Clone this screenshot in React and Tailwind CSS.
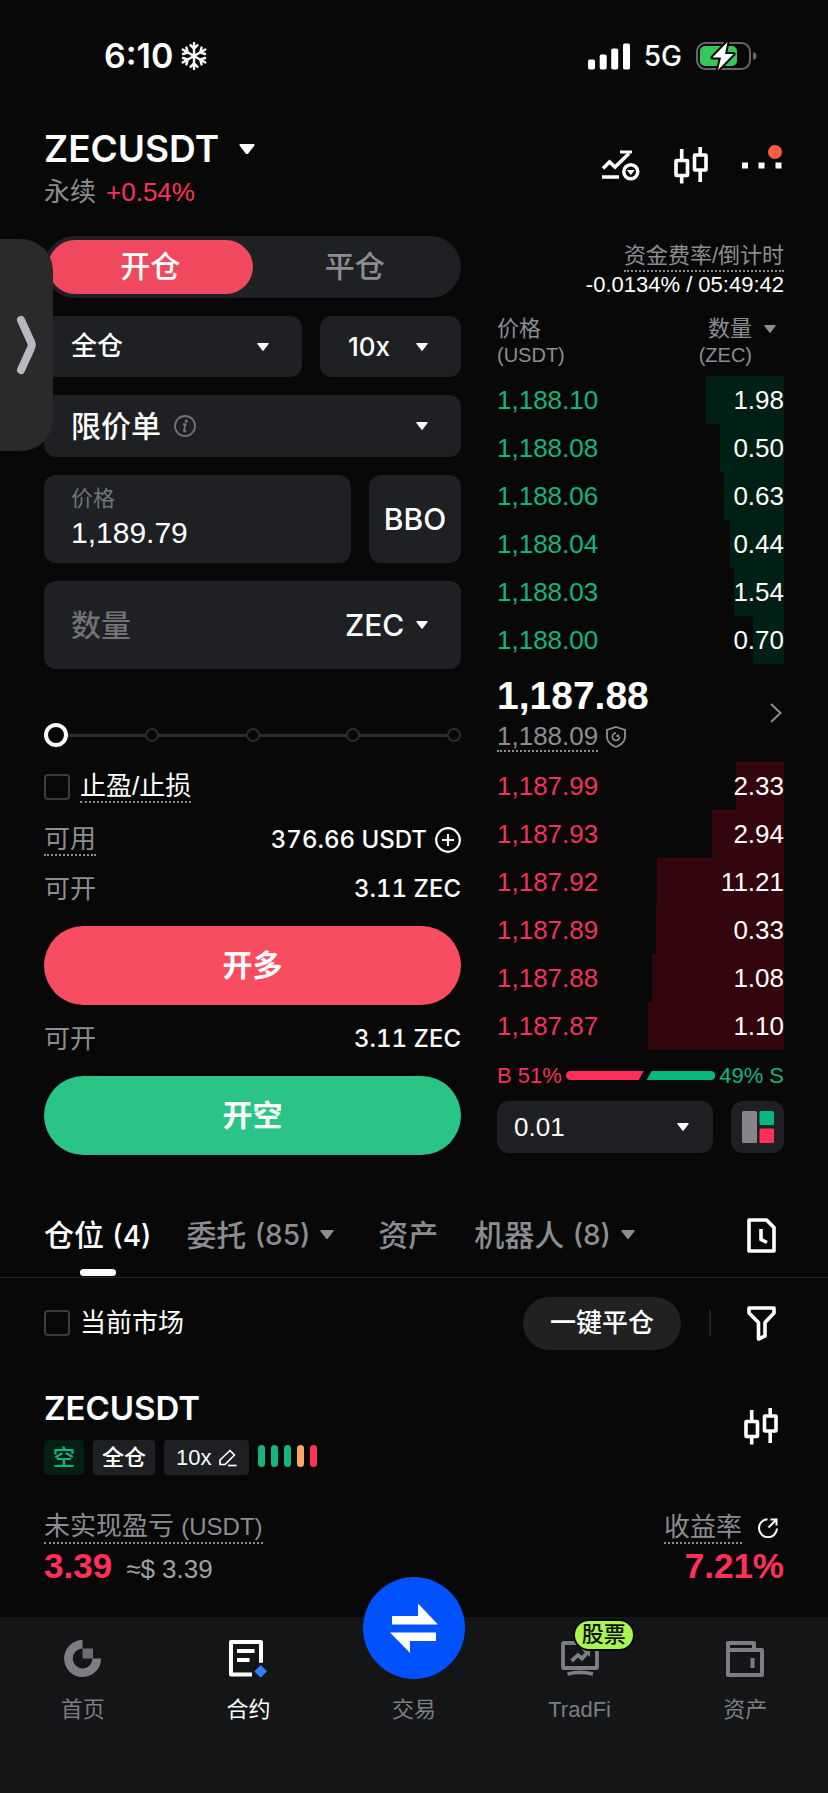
import { useState } from 'react';

const asks = [
  { price: '1,188.10', size: '1.98', depth: 78 },
  { price: '1,188.08', size: '0.50', depth: 64 },
  { price: '1,188.06', size: '0.63', depth: 60 },
  { price: '1,188.04', size: '0.44', depth: 54 },
  { price: '1,188.03', size: '1.54', depth: 50 },
  { price: '1,188.00', size: '0.70', depth: 31 },
];

const bids = [
  { price: '1,187.99', size: '2.33', depth: 48 },
  { price: '1,187.93', size: '2.94', depth: 72 },
  { price: '1,187.92', size: '11.21', depth: 127 },
  { price: '1,187.89', size: '0.33', depth: 128 },
  { price: '1,187.88', size: '1.08', depth: 132 },
  { price: '1,187.87', size: '1.10', depth: 136 },
];

const MAX_DEPTH = 287;

function Caret({ className = 'w-3' }) {
  return (
    <svg viewBox="0 0 12 8" fill="currentColor" className={className} aria-hidden="true">
      <path d="M1 0h10a.7.7 0 01.6 1.1L6.6 7.6a.8.8 0 01-1.2 0L.4 1.1A.7.7 0 011 0z" />
    </svg>
  );
}

function CandleIcon() {
  return (
    <svg viewBox="0 0 34 37" className="w-[34px] h-[37px]" fill="none" stroke="currentColor" strokeWidth="3.6" aria-hidden="true">
      <rect x="2" y="13.5" width="11.5" height="15" rx="0.5" />
      <path d="M7.7 2v11M7.7 29v7.5" />
      <rect x="20.5" y="8" width="11.5" height="15" rx="0.5" />
      <path d="M26.2 0v8M26.2 23v12" />
    </svg>
  );
}

/** Text with the dotted underline that marks an explainable term. */
function Term({ children, className = '' }) {
  return <span className={`inline-block border-b-2 border-dotted border-[#8b8d91] ${className}`}>{children}</span>;
}

/**
 * Drop-down in the dark field style, caret on the right.
 */
function Picker({ label, options, className = '', caret = 'right-[33px]' }) {
  return (
    <div className="relative h-full">
      <select
        aria-label={label}
        className={`w-full h-full appearance-none rounded-xl bg-[#1e2023] text-white outline-none ${className}`}
      >
        {options.map((o) => (
          <option key={o}>{o}</option>
        ))}
      </select>
      <span className={`absolute inset-y-0 flex items-center pointer-events-none ${caret}`}>
        <Caret />
      </span>
    </div>
  );
}

function CheckRow({ id, children }) {
  return (
    <div className="flex items-center gap-[10px]">
      <input
        id={id}
        type="checkbox"
        className="w-[26px] h-[26px] shrink-0 appearance-none rounded-sm border-2 border-[#3b3c40] checked:bg-[#f84c60]"
      />
      <label htmlFor={id} className="text-[26px] leading-[30px]">
        {children}
      </label>
    </div>
  );
}

function StatusBar() {
  return (
    <div className="h-28 flex items-center justify-between pl-[104px] pr-[71px] font-[family-name:Inter,sans-serif]">
      <div className="flex items-center gap-2">
        <span className="text-[34px] leading-10 font-semibold">6:10</span>
        <svg viewBox="0 0 26 28" className="w-[26px] h-7" fill="none" stroke="currentColor" strokeWidth="2.4" strokeLinecap="round">
          <path d="M13 1v26M1.7 7.5l22.6 13M1.7 20.5l22.6-13" />
          <path d="M9.5 3.2L13 6.5l3.5-3.3M9.5 24.8l3.5-3.3 3.5 3.3" />
          <path d="M2 12l4.8-1.5L5.4 5.6M24 12l-4.8-1.5 1.4-4.9M2 16l4.8 1.5-1.4 4.9M24 16l-4.8 1.5 1.4 4.9" />
        </svg>
      </div>
      <div className="flex items-center">
        <svg viewBox="0 0 42 27" className="w-[42px] h-[27px]" fill="currentColor">
          <rect x="0" y="16.5" width="7" height="10" rx="1.8" />
          <rect x="11.7" y="11.5" width="7" height="15" rx="1.8" />
          <rect x="23.2" y="5.5" width="7" height="21" rx="1.8" />
          <rect x="35" y="0.5" width="7" height="26" rx="1.8" />
        </svg>
        <span className="ml-[14px] text-[28px] leading-10 font-medium">5G</span>
        <svg viewBox="0 0 61 30" className="ml-[14px] w-[61px] h-[30px]">
          <rect x="1" y="2" width="53" height="26" rx="8.5" fill="none" stroke="#666" strokeWidth="2" />
          <path d="M57 11c3 1 3.5 2.5 3.5 4s-.5 3-3.5 4z" fill="#666" />
          <rect x="4" y="5" width="37" height="20" rx="5" fill="#34c759" />
          <path d="M31.5 1L16.5 16.5h8.5L22 29l15.5-16h-8.5z" fill="#fff" stroke="#080808" strokeWidth="4" paintOrder="stroke" strokeLinejoin="round" />
        </svg>
      </div>
    </div>
  );
}

function Header() {
  return (
    <header className="mt-[15px] px-11 flex items-center justify-between">
      <div>
        <button type="button" className="flex items-center gap-5 font-[family-name:Inter,sans-serif]">
          <span className="text-[37px] leading-[44px] font-semibold">ZECUSDT</span>
          <Caret className="w-4" />
        </button>
        <p className="mt-[5px] flex gap-[10px] text-[26px] leading-8">
          <span className="text-[#8b8d91]">永续</span>
          <span className="text-[#ff3159]">+0.54%</span>
        </p>
      </div>
      <div className="flex items-center gap-[34px] pb-1">
        <button type="button" aria-label="图表策略">
          <svg viewBox="0 0 38 31" className="w-[38px] h-[31px]" fill="none" stroke="currentColor" strokeWidth="3.5">
            <path d="M1 18.5l6.5-6.5 5.5 5L27 3.5" />
            <path d="M18 2h12" strokeWidth="3" />
            <path d="M0 27h17" />
            <circle cx="28.8" cy="21.8" r="7" />
            <path d="M24.8 20h8l-4 5z" fill="currentColor" stroke="none" />
          </svg>
        </button>
        <button type="button" aria-label="K线">
          <CandleIcon />
        </button>
        <button type="button" aria-label="更多" className="relative">
          <svg viewBox="0 0 42 37" className="w-[42px] h-[37px]" fill="currentColor">
            <rect x="0" y="15.5" width="6" height="6" />
            <rect x="16.5" y="15.5" width="6" height="6" />
            <rect x="33.5" y="15.5" width="6" height="6" />
          </svg>
          <span className="absolute right-[2px] -top-[2px] w-[14px] h-[14px] rounded-full bg-[#ff5a45]" />
        </button>
      </div>
    </header>
  );
}

function AmountRow({ label, value, children }) {
  return (
    <div className="flex items-center justify-between text-[26px] leading-[30px] h-[34px]">
      <span className="text-[#8b8d91]">{label}</span>
      <span className="flex items-center gap-2 text-[24px] font-medium tabular-nums font-[family-name:Inter,sans-serif]">
        {value}
        {children}
      </span>
    </div>
  );
}

function OrderForm() {
  const [percent, setPercent] = useState(0);

  return (
    <form className="flex-1 min-w-0" onSubmit={(e) => e.preventDefault()}>
      {/* Open / close switch */}
      <div className="flex h-[62px] p-1 rounded-full bg-[#1e2023] text-[30px] leading-10 font-medium">
        <button type="button" className="flex-1 rounded-full bg-[#f0485e]">
          开仓
        </button>
        <button type="button" className="flex-1 rounded-full text-[#8b8d91]">
          平仓
        </button>
      </div>

      <div className="mt-[18px] flex gap-[18px] h-[61px] text-[26px] font-medium">
        <div className="flex-1">
          <Picker label="保证金模式" options={['全仓', '逐仓']} className="pl-[27px]" />
        </div>
        <div className="w-[141px] font-[family-name:Inter,sans-serif]">
          <Picker label="杠杆" options={['10x', '20x', '50x']} className="pl-7" />
        </div>
      </div>

      <div className="relative mt-[18px] h-[62px] text-[30px] font-medium">
        <Picker label="订单类型" options={['限价单', '市价单']} className="pl-[27px]" />
        <svg viewBox="0 0 22 22" className="absolute left-[130px] top-5 w-[22px] h-[22px] pointer-events-none" fill="none" stroke="#717377" strokeWidth="1.8">
          <circle cx="11" cy="11" r="10" />
          <path d="M9 9.5h2.5L10 15.5c-.2 1 .8 1 2 0" />
          <circle cx="12.2" cy="6.2" r="0.7" fill="#717377" />
        </svg>
      </div>

      <div className="mt-[18px] flex gap-[18px] h-[88px]">
        <div className="flex-1 min-w-0 rounded-xl bg-[#1e2023] px-[27px] pt-[10px]">
          <label htmlFor="price" className="block text-[22px] leading-7 text-[#717377]">
            价格
          </label>
          <input id="price" defaultValue="1,189.79" className="block w-full bg-transparent text-[30px] leading-10 outline-none" />
        </div>
        <button type="button" className="w-[92px] rounded-xl bg-[#1e2023] text-[30px] font-medium font-[family-name:Inter,sans-serif]">
          BBO
        </button>
      </div>

      <div className="mt-[18px] flex h-[88px] rounded-xl bg-[#1e2023]">
        <input
          aria-label="数量"
          placeholder="数量"
          className="flex-1 min-w-0 bg-transparent pl-[27px] text-[30px] font-medium placeholder:text-[#717377] outline-none"
        />
        <div className="w-[160px] text-[30px] font-medium font-[family-name:Inter,sans-serif]">
          <Picker label="数量单位" options={['ZEC', 'USDT']} className="pl-[44px]" />
        </div>
      </div>

      {/* Position size slider */}
      <div className="relative mt-[54px] h-6 flex items-center">
        <div className="absolute inset-x-2 h-[3px] bg-[#2d2d2f]" />
        <div className="relative w-full flex justify-between">
          {[0, 25, 50, 75, 100].map((step) => (
            <span key={step} className="w-[14px] h-[14px] rounded-full border-2 border-[#2d2d2f] bg-[#080808]" />
          ))}
        </div>
        <input
          type="range"
          aria-label="仓位比例"
          value={percent}
          onChange={(e) => setPercent(Number(e.target.value))}
          className="absolute inset-0 w-full h-6 appearance-none bg-transparent [&::-webkit-slider-thumb]:appearance-none [&::-webkit-slider-thumb]:w-6 [&::-webkit-slider-thumb]:h-6 [&::-webkit-slider-thumb]:rounded-full [&::-webkit-slider-thumb]:border-4 [&::-webkit-slider-thumb]:border-solid [&::-webkit-slider-thumb]:border-white [&::-webkit-slider-thumb]:bg-[#080808]"
        />
      </div>

      <div className="mt-6">
        <CheckRow id="tpsl">
          <Term>止盈/止损</Term>
        </CheckRow>
      </div>

      <div className="mt-5">
        <AmountRow label={<Term>可用</Term>} value="376.66 USDT">
          <svg viewBox="0 0 26 26" className="w-[26px] h-[26px]" fill="none" stroke="currentColor" strokeWidth="2.2">
            <circle cx="13" cy="13" r="11.8" />
            <path d="M13 7v12M7 13h12" />
          </svg>
        </AmountRow>
      </div>
      <div className="mt-[15px]">
        <AmountRow label="可开" value="3.11 ZEC" />
      </div>
      <button type="button" className="mt-5 w-full h-[79px] rounded-full bg-[#f84c60] text-[30px] font-bold">
        开多
      </button>
      <div className="mt-[17px]">
        <AmountRow label="可开" value="3.11 ZEC" />
      </div>
      <button type="button" className="mt-5 w-full h-[79px] rounded-full bg-[#2bc487] text-[30px] font-bold">
        开空
      </button>
    </form>
  );
}

function BookRow({ price, size, depth, textClass, barClass }) {
  return (
    <tr className="relative h-12">
      <td className={`p-0 ${textClass}`}>{price}</td>
      <td className="p-0 text-right">
        <div className={`absolute inset-y-0 right-0 ${barClass}`} style={{ width: `${(depth / MAX_DEPTH) * 100}%` }} />
        <span className="relative">{size}</span>
      </td>
    </tr>
  );
}

function OrderBook() {
  return (
    <section className="w-[287px] pt-[6px]">
      <div className="flex flex-col items-end text-[22px]">
        <Term className="leading-7 text-[#8b8d91]">资金费率/倒计时</Term>
        <p className="leading-[26px]">-0.0134% / 05:49:42</p>
      </div>

      <table className="mt-[18px] w-full table-fixed border-collapse text-[26px]">
        <thead>
          <tr className="h-[60px] align-top text-[22px] leading-[26px] text-[#8b8d91]">
            <th className="p-0 text-left font-normal">
              价格
              <br />
              <span className="text-[20px]">(USDT)</span>
            </th>
            <th className="p-0 font-normal">
              <div className="flex justify-end gap-3">
                <span className="text-right">
                  数量
                  <br />
                  <span className="text-[20px]">(ZEC)</span>
                </span>
                <Caret className="w-3 h-2 mt-[9px] mr-2" />
              </div>
            </th>
          </tr>
        </thead>
        <tbody>
          {asks.map((row) => (
            <BookRow key={row.price} {...row} textClass="text-[#14b47d]" barClass="bg-[#002016]" />
          ))}
        </tbody>
        <tbody>
          <tr className="h-[98px]">
            <td colSpan={2} className="p-0">
              <div className="flex items-center justify-between">
                <div>
                  <p className="text-[39px] leading-[44px] font-bold">1,187.88</p>
                  <p className="mt-1 flex items-center gap-2 text-[#8b8d91]">
                    <Term className="leading-7">1,188.09</Term>
                    <svg viewBox="0 0 20 22" className="w-5 h-[22px]" fill="none" stroke="currentColor" strokeWidth="1.8">
                      <path d="M10 1l9 3v7c0 4.5-3 7.5-9 10-6-2.5-9-5.5-9-10V4z" />
                      <path d="M10 7.2a3.6 3.6 0 103.6 3.6" />
                      <path d="M10.5 8.500h2.500v2.500h-2.500z" fill="currentColor" stroke="none" />
                    </svg>
                  </p>
                </div>
                <svg viewBox="0 0 12 20" className="w-3 h-5 mr-[2px]" fill="none" stroke="#8b8d91" strokeWidth="2">
                  <path d="M1 1l9.5 9L1 19" />
                </svg>
              </div>
            </td>
          </tr>
        </tbody>
        <tbody>
          {bids.map((row) => (
            <BookRow key={row.price} {...row} textClass="text-[#f2325a]" barClass="bg-[#33060d]" />
          ))}
        </tbody>
      </table>

      {/* Buy / sell ratio */}
      <div className="h-[51px] flex items-center gap-1 text-[22px]">
        <span className="text-[#f2325a]">B 51%</span>
        <svg viewBox="0 0 150 9" preserveAspectRatio="none" className="flex-1 min-w-0 h-[9px]">
          <path d="M4.5 0H78l-5 9H4.5a4.5 4.5 0 010-9z" fill="#ff3159" />
          <path d="M86 0h59.5a4.5 4.5 0 010 9H81z" fill="#06b87c" />
        </svg>
        <span className="text-[#14b47d]">49% S</span>
      </div>

      <div className="flex gap-[18px] h-[52px]">
        <div className="flex-1 text-[26px]">
          <Picker label="价格精度" options={['0.01', '0.1', '1']} className="pl-[17px]" caret="right-6" />
        </div>
        <button type="button" aria-label="盘口布局" className="w-[53px] rounded-xl bg-[#1e2023] flex items-center justify-center">
          <svg viewBox="0 0 32 32" className="w-8 h-8">
            <rect x="0" y="0" width="15" height="32" rx="1.5" fill="#85878b" />
            <rect x="17.5" y="0" width="14.5" height="14" rx="1.5" fill="#06b87c" />
            <rect x="17.5" y="17.5" width="14.5" height="14.5" rx="1.5" fill="#ff3159" />
          </svg>
        </button>
      </div>
    </section>
  );
}

function Tabs() {
  return (
    <nav className="mt-[42px] px-11 flex items-stretch justify-between border-b border-[#242527]">
      <div className="flex h-20 text-[30px] font-medium text-[#8b8d91]">
        <button type="button" className="relative pb-1 mr-[35px] text-white whitespace-nowrap">
          仓位 <span className="text-[28px] font-[family-name:Inter,sans-serif]">(4)</span>
          <span className="absolute bottom-[1px] left-1/2 -translate-x-1/2 w-9 h-[7px] rounded-sm bg-white" />
        </button>
        <button type="button" className="flex items-center pb-1 mr-[44px] whitespace-nowrap">
          委托&nbsp;<span className="mr-[10px] text-[28px] font-[family-name:Inter,sans-serif]">(85)</span>
          <Caret className="w-[14px]" />
        </button>
        <button type="button" className="pb-1 mr-9 whitespace-nowrap">
          资产
        </button>
        <button type="button" className="flex items-center pb-1 whitespace-nowrap">
          机器人&nbsp;<span className="mr-[10px] text-[28px] font-[family-name:Inter,sans-serif]">(8)</span>
          <Caret className="w-[14px]" />
        </button>
      </div>
      <button type="button" aria-label="历史记录" className="mr-2 pb-1">
        <svg viewBox="0 0 29 35" className="w-[29px] h-[35px]" fill="none" stroke="currentColor" strokeWidth="3.6">
          <path d="M2 2h17.5l7.5 7.5V33H2z" strokeLinejoin="round" />
          <path d="M14 11v10.5l6 3" />
        </svg>
      </button>
    </nav>
  );
}

function PositionList() {
  return (
    <section className="px-11">
      <div className="mt-[18px] h-[54px] flex items-center justify-between">
        <CheckRow id="current-market">当前市场</CheckRow>
        <div className="flex items-center mr-2">
          <button type="button" className="w-[158px] h-[53px] rounded-full bg-[#212121] text-[26px] font-medium">
            一键平仓
          </button>
          <span className="ml-7 mr-9 w-[2px] h-[26px] bg-[#212224]" />
          <button type="button" aria-label="筛选">
            <svg viewBox="0 0 29 35" className="w-[29px] h-[35px]" fill="none" stroke="currentColor" strokeWidth="3.6" strokeLinejoin="round">
              <path d="M2 2h25v5l-9 9.5V30l-6.5 3V16.5L2 7z" />
            </svg>
          </button>
        </div>
      </div>

      <article>
        <div className="mt-[38px] flex items-start justify-between">
          <div>
            <h2 className="text-[33px] leading-10 font-semibold font-[family-name:Inter,sans-serif]">ZECUSDT</h2>
            <div className="mt-3 flex items-center gap-[9px] text-[22px] font-medium leading-[35px]">
              <span className="h-[35px] px-[9px] rounded bg-[#002016] text-[#14b47d]">空</span>
              <span className="h-[35px] px-[9px] rounded bg-[#1e2023]">全仓</span>
              <button type="button" className="h-[35px] px-3 rounded bg-[#1e2023] flex items-center gap-[7px]">
                <span>10x</span>
                <svg viewBox="0 0 18 18" className="w-[18px] h-[18px]" fill="none" stroke="currentColor" strokeWidth="1.7">
                  <path d="M1 11L11 1.5l4.5 4.5L6 15.5H1z" strokeLinejoin="round" />
                  <path d="M9 16.5h8.5" />
                </svg>
              </button>
              <div className="flex gap-[6px] mb-1" aria-label="自动减仓指示">
                <span className="w-[7px] h-[22px] rounded-full bg-[#14b47d]" />
                <span className="w-[7px] h-[22px] rounded-full bg-[#14b47d]" />
                <span className="w-[7px] h-[22px] rounded-full bg-[#14b47d]" />
                <span className="w-[7px] h-[22px] rounded-full bg-[#fda85f]" />
                <span className="w-[7px] h-[22px] rounded-full bg-[#ff3159]" />
              </div>
            </div>
          </div>
          <button type="button" aria-label="K线" className="mt-5 mr-[6px]">
            <CandleIcon />
          </button>
        </div>

        <div className="mt-9 flex justify-between text-[26px] text-[#8b8d91]">
          <Term className="leading-[30px]">
            未实现盈亏 <span className="text-[24px]">(USDT)</span>
          </Term>
          <div className="flex items-center gap-4 mr-[6px]">
            <Term className="leading-[30px]">收益率</Term>
            <svg viewBox="0 0 20 20" className="w-5 h-5 text-white" fill="none" stroke="currentColor" strokeWidth="2">
              <path d="M9.5 1.2A9 9 0 1019 10.5" />
              <path d="M12.5 1.5h6v6M18 2l-7.5 7.5" />
            </svg>
          </div>
        </div>
        <div className="mt-[2px] flex items-baseline justify-between leading-10 text-[#ff3159]">
          <p className="flex items-baseline gap-[14px]">
            <span className="text-[35px] font-bold">3.39</span>
            <span className="text-[26px] text-[#a0a1a4]">≈$ 3.39</span>
          </p>
          <p className="text-[35px] font-bold">7.21%</p>
        </div>
      </article>
    </section>
  );
}

const navItems = [
  {
    label: '首页',
    icon: (
      <svg viewBox="0 0 38 37" className="w-[38px] h-[37px]">
        <path d="M18.5 4.3A14.2 14.2 0 1032.8 18.5" fill="none" stroke="currentColor" strokeWidth="8.6" />
        <rect x="18.5" y="8.5" width="10.5" height="10" fill="currentColor" opacity="0.85" />
      </svg>
    ),
  },
  {
    label: '合约',
    active: true,
    icon: (
      <svg viewBox="0 0 38 37" className="w-[38px] h-[37px]" fill="none" stroke="currentColor" strokeWidth="4">
        <path d="M32 22.7V2H2v32.5h21" strokeLinejoin="round" />
        <path d="M8 11h17.5M8 20h12.5" />
        <rect x="27.2" y="26.8" width="9" height="9" rx="1" transform="rotate(45 31.7 31.3)" fill="#2f80ff" stroke="none" />
      </svg>
    ),
  },
  { label: '交易', transfer: true },
  {
    label: 'TradFi',
    badge: '股票',
    icon: (
      <svg viewBox="0 0 38 37" className="w-[38px] h-[37px]" fill="none" stroke="currentColor" strokeWidth="3.8">
        <rect x="2" y="3" width="34" height="25" rx="0.5" />
        <path d="M10.5 21l6.5-6 4 3.5 7-8" />
        <path d="M20 9h9v8z" fill="currentColor" stroke="none" />
        <path d="M6.5 34c8-2 17-2 25.5 0" />
      </svg>
    ),
  },
  {
    label: '资产',
    icon: (
      <svg viewBox="0 0 38 37" className="w-[38px] h-[37px]" fill="none" stroke="currentColor" strokeWidth="4" strokeLinejoin="round">
        <path d="M2 10V3h26v7" />
        <rect x="2" y="10" width="34" height="25" />
        <path d="M26.5 18v10" />
      </svg>
    ),
  },
];

function BottomNav() {
  return (
    <nav className="mt-7 h-44 grid grid-cols-5 bg-[#141517]">
      {navItems.map(({ label, icon, active, badge, transfer }) => (
        <a
          key={label}
          href="#"
          className={`relative flex flex-col items-center pt-[23px] text-[22px] ${active ? 'text-white' : 'text-[#7c7e82]'}`}
        >
          {transfer ? (
            <>
              <span className="h-[37px]" />
              <span className="absolute left-1/2 -translate-x-1/2 -top-10 w-[102px] h-[102px] rounded-full bg-[#0052ff]">
                <svg viewBox="0 0 102 102" className="w-full h-full" fill="#fff">
                  <path d="M29 39h26V26.5L75 47.5H29z" />
                  <path d="M27 55.5h46V64H47v12z" />
                </svg>
              </span>
            </>
          ) : (
            icon
          )}
          {badge && (
            <span className="absolute left-[76px] top-[2px] h-8 px-[7px] border-2 border-[#080808] rounded-full bg-[#a8f551] text-[#111] leading-[27px] font-medium">
              {badge}
            </span>
          )}
          <span className="mt-[18px] leading-[30px]">{label}</span>
        </a>
      ))}
    </nav>
  );
}

export default function App() {
  return (
    <div className="relative min-h-screen overflow-hidden bg-[#080808] text-white font-[family-name:'Liberation_Sans','Noto_Sans_CJK_SC',sans-serif]">
      <StatusBar />
      <Header />
      <main>
        <div className="mt-7 px-11 flex gap-9">
          <OrderForm />
          <OrderBook />
        </div>
        <Tabs />
        <PositionList />
      </main>
      <BottomNav />

      {/* Edge handle of the floating drawer */}
      <button type="button" aria-label="展开侧边栏" className="absolute left-0 top-[239px] w-[53px] h-[212px] rounded-r-[32px] bg-[#2a2a2a]">
        <svg viewBox="0 0 53 212" className="w-full h-full" fill="none" stroke="#b9b8c0" strokeWidth="8" strokeLinecap="round" strokeLinejoin="round">
          <path d="M21 81l10 22q1.5 3 0 6l-10 22" />
        </svg>
      </button>
    </div>
  );
}
